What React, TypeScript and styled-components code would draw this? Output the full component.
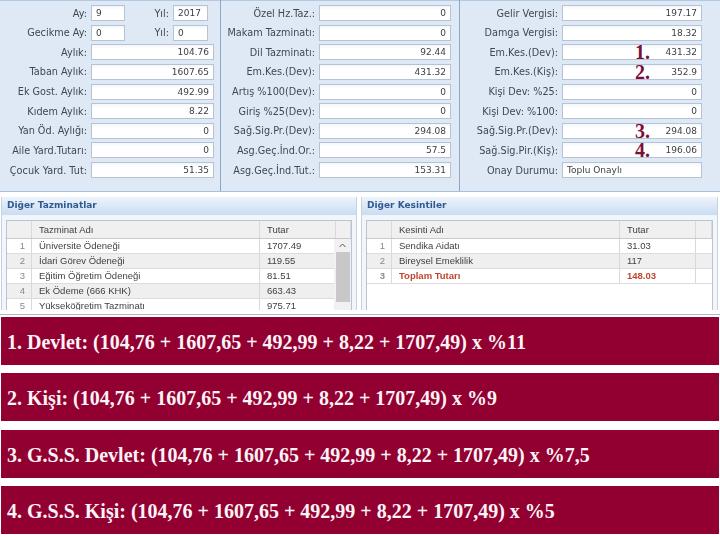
import React from "react";
import styled, { createGlobalStyle } from "styled-components";

const GlobalStyle = createGlobalStyle`
  html, body {
    margin: 0;
    padding: 0;
    background: #fff;
  }
`;

const Page = styled.div`
  width: 720px;
  height: 540px;
  overflow: hidden;
  display: flex;
  flex-direction: column;
  background: #fff;
  font-family: "DejaVu Sans", Verdana, sans-serif;
`;

const FormRow = styled.div`
  display: grid;
  grid-template-columns: 220px 238px 260px;
  gap: 1px;
  height: 191px;
  flex: none;
  background: #8ba9c6;
  border-bottom: 1px solid #a9c0d8;
`;

const FormPanel = styled.div<{ $labelWidth: number; $inputWidth: number }>`
  display: grid;
  grid-template-columns: ${(p) => p.$labelWidth}px ${(p) => p.$inputWidth}px;
  grid-auto-rows: 16px;
  row-gap: 3.65px;
  column-gap: 4px;
  align-content: start;
  padding-top: 4px;
  background: #dfe9f6;
  border-top: 1px solid #b3c9df;
`;

const Label = styled.label`
  align-self: center;
  justify-self: end;
  text-align: right;
  white-space: nowrap;
  font-size: 9.7px;
  color: #3f4750;
  filter: blur(0.3px);
`;

const Field = styled.div<{ $text?: boolean }>`
  position: relative;
  box-sizing: border-box;
  height: 16px;
  padding: 0 4px;
  background: linear-gradient(#f4f6f8, #fff 30%);
  border: 1px solid #b4c4d6;
  font-size: 9px;
  line-height: 15px;
  color: #3a3f44;
  text-align: ${(p) => (p.$text ? "left" : "right")};
`;

const FieldValue = styled.span`
  filter: blur(0.25px);
`;

const Marker = styled.span`
  position: absolute;
  left: 72px;
  top: -2px;
  font-family: "Liberation Serif", serif;
  font-weight: 700;
  font-size: 20px;
  line-height: 18px;
  color: #7c0f38;
`;

const SplitRow = styled.div`
  display: grid;
  grid-template-columns: 34px 1fr 35px;
  column-gap: 4px;
  align-items: center;
  padding-right: 6px;
`;

const GridRow = styled.div`
  display: grid;
  grid-template-columns: 356px 357px;
  column-gap: 4px;
  height: 123px;
  flex: none;
  padding: 5px 0 4px 1px;
  box-sizing: border-box;
  border-bottom: 1px solid #a9bdc9;
`;

const TablePanel = styled.section`
  display: flex;
  flex-direction: column;
  overflow: hidden;
  background: #f2f6fb;
  border-left: 1px solid #c3d3e4;
  border-right: 1px solid #c3d3e4;
`;

const PanelTitle = styled.h3`
  flex: none;
  margin: 0;
  height: 18px;
  padding-left: 5px;
  background: linear-gradient(#eef4fb, #c9dcf1);
  font-size: 9px;
  font-weight: 700;
  line-height: 17px;
  color: #2f5a94;
  filter: blur(0.3px);
`;

const TableBox = styled.div`
  flex: 1;
  margin: 5px 4px 0;
  background: #fff;
  border: 1px solid #b7c4d2;
  border-bottom: 0;
  overflow: hidden;
`;

const Row = styled.div<{ $head?: boolean; $alt?: boolean; $total?: boolean }>`
  display: grid;
  grid-template-columns: 25px 228px 76px 1fr;
  height: ${(p) => (p.$head ? 18 : 15)}px;
  box-sizing: border-box;
  font-size: 9.5px;
  line-height: ${(p) => (p.$head ? 17 : 14)}px;
  font-family: "Liberation Sans", Arial, sans-serif;
  font-weight: ${(p) => (p.$total ? 700 : 400)};
  color: ${(p) => (p.$total ? "#c0462c" : "#3d3f42")};
  background: ${(p) => (p.$head ? "#f0f0f0" : p.$alt ? "#efefef" : "#fff")};
  border-bottom: 1px solid ${(p) => (p.$head ? "#c9c9c9" : "#dcdcdc")};
`;

const Cell = styled.div<{ $index?: boolean }>`
  padding: 0 ${(p) => (p.$index ? "6px" : "0")} 0 ${(p) => (p.$index ? "0" : "7px")};
  text-align: ${(p) => (p.$index ? "right" : "left")};
  color: ${(p) => (p.$index ? "#8a8a8a" : "inherit")};
  white-space: nowrap;
  overflow: hidden;
  border-right: 1px solid #d9d9d9;
  filter: blur(0.3px);
`;

const TableBody = styled.div`
  position: relative;
`;

const ScrollBar = styled.div`
  position: absolute;
  top: 0;
  right: 0;
  width: 17px;
  bottom: 0;
  display: flex;
  flex-direction: column;
  align-items: center;
  background: #f1f1f1;
`;

const ScrollThumb = styled.div`
  width: 14px;
  height: 50px;
  background: #c8c8c8;
`;

const ScrollArrow = styled.svg`
  flex: none;
  width: 17px;
  height: 13px;
`;

const Notes = styled.div`
  display: flex;
  flex-direction: column;
  gap: 8.3px;
  padding: 2px 1px 0;
`;

const Note = styled.div`
  height: 48px;
  padding-left: 6px;
  background: #920031;
  color: #fbf3f5;
  font-family: "Liberation Serif", "Times New Roman", serif;
  font-weight: 700;
  font-size: 20px;
  line-height: 51px;
  white-space: nowrap;
`;

type Item = { label: string; value: string; marker?: string; text?: boolean };

const firstPanel: Item[] = [
  { label: "Aylık:", value: "104.76" },
  { label: "Taban Aylık:", value: "1607.65" },
  { label: "Ek Gost. Aylık:", value: "492.99" },
  { label: "Kıdem Aylık:", value: "8.22" },
  { label: "Yan Öd. Aylığı:", value: "0" },
  { label: "Aile Yard.Tutarı:", value: "0" },
  { label: "Çocuk Yard. Tut:", value: "51.35" },
];

const secondPanel: Item[] = [
  { label: "Özel Hz.Taz.:", value: "0" },
  { label: "Makam Tazminatı:", value: "0" },
  { label: "Dil Tazminatı:", value: "92.44" },
  { label: "Em.Kes.(Dev):", value: "431.32" },
  { label: "Artış %100(Dev):", value: "0" },
  { label: "Giriş %25(Dev):", value: "0" },
  { label: "Sağ.Sig.Pr.(Dev):", value: "294.08" },
  { label: "Asg.Geç.İnd.Or.:", value: "57.5" },
  { label: "Asg.Geç.İnd.Tut.:", value: "153.31" },
];

const thirdPanel: Item[] = [
  { label: "Gelir Vergisi:", value: "197.17" },
  { label: "Damga Vergisi:", value: "18.32" },
  { label: "Em.Kes.(Dev):", value: "431.32", marker: "1." },
  { label: "Em.Kes.(Kiş):", value: "352.9", marker: "2." },
  { label: "Kişi Dev: %25:", value: "0" },
  { label: "Kişi Dev: %100:", value: "0" },
  { label: "Sağ.Sig.Pr.(Dev):", value: "294.08", marker: "3." },
  { label: "Sağ.Sig.Pir.(Kiş):", value: "196.06", marker: "4." },
  { label: "Onay Durumu:", value: "Toplu Onaylı", text: true },
];

const allowances = [
  ["1", "Üniversite Ödeneği", "1707.49"],
  ["2", "İdari Görev Ödeneği", "119.55"],
  ["3", "Eğitim Öğretim Ödeneği", "81.51"],
  ["4", "Ek Ödeme (666 KHK)", "663.43"],
  ["5", "Yükseköğretim Tazminatı", "975.71"],
];

const deductions = [
  ["1", "Sendika Aidatı", "31.03"],
  ["2", "Bireysel Emeklilik", "117"],
  ["3", "Toplam Tutarı", "148.03"],
];

const notes = [
  "1. Devlet: (104,76 + 1607,65 + 492,99 + 8,22 + 1707,49) x %11",
  "2. Kişi: (104,76 + 1607,65 + 492,99 + 8,22 + 1707,49) x %9",
  "3. G.S.S. Devlet: (104,76 + 1607,65 + 492,99 + 8,22 + 1707,49) x %7,5",
  "4. G.S.S. Kişi: (104,76 + 1607,65 + 492,99 + 8,22 + 1707,49) x %5",
];

function Fields({ items }: { items: Item[] }) {
  return (
    <>
      {items.map((it) => (
        <React.Fragment key={it.label}>
          <Label>{it.label}</Label>
          <Field $text={it.text}>
            <FieldValue>{it.value}</FieldValue>
            {it.marker && <Marker>{it.marker}</Marker>}
          </Field>
        </React.Fragment>
      ))}
    </>
  );
}

function SmallField({ value }: { value: string }) {
  return (
    <Field $text>
      <FieldValue>{value}</FieldValue>
    </Field>
  );
}

export default function App() {
  return (
    <Page>
      <GlobalStyle />
      <FormRow>
        <FormPanel $labelWidth={87} $inputWidth={123}>
          <Label>Ay:</Label>
          <SplitRow>
            <SmallField value="9" />
            <Label>Yıl:</Label>
            <SmallField value="2017" />
          </SplitRow>
          <Label>Gecikme Ay:</Label>
          <SplitRow>
            <SmallField value="0" />
            <Label>Yıl:</Label>
            <SmallField value="0" />
          </SplitRow>
          <Fields items={firstPanel} />
        </FormPanel>
        <FormPanel $labelWidth={94} $inputWidth={132}>
          <Fields items={secondPanel} />
        </FormPanel>
        <FormPanel $labelWidth={98} $inputWidth={140}>
          <Fields items={thirdPanel} />
        </FormPanel>
      </FormRow>
      <GridRow>
        <TablePanel>
          <PanelTitle>Diğer Tazminatlar</PanelTitle>
          <TableBox>
            <Row $head>
              <Cell />
              <Cell>Tazminat Adı</Cell>
              <Cell>Tutar</Cell>
              <Cell />
            </Row>
            <TableBody>
              {allowances.map((r, i) => (
                <Row key={r[0]} $alt={i % 2 === 1}>
                  <Cell $index>{r[0]}</Cell>
                  <Cell>{r[1]}</Cell>
                  <Cell>{r[2]}</Cell>
                </Row>
              ))}
              <ScrollBar>
                <ScrollArrow viewBox="0 0 17 13">
                  <path d="M5.5 8 L8.5 5 L11.5 8" fill="none" stroke="#555" strokeWidth="1" />
                </ScrollArrow>
                <ScrollThumb />
              </ScrollBar>
            </TableBody>
          </TableBox>
        </TablePanel>
        <TablePanel>
          <PanelTitle>Diğer Kesintiler</PanelTitle>
          <TableBox>
            <Row $head>
              <Cell />
              <Cell>Kesinti Adı</Cell>
              <Cell>Tutar</Cell>
              <Cell />
            </Row>
            {deductions.map((r, i) => (
              <Row key={r[0]} $alt={i === 1} $total={i === 2}>
                <Cell $index>{r[0]}</Cell>
                <Cell>{r[1]}</Cell>
                <Cell>{r[2]}</Cell>
              </Row>
            ))}
          </TableBox>
        </TablePanel>
      </GridRow>
      <Notes>
        {notes.map((n) => (
          <Note key={n}>{n}</Note>
        ))}
      </Notes>
    </Page>
  );
}
